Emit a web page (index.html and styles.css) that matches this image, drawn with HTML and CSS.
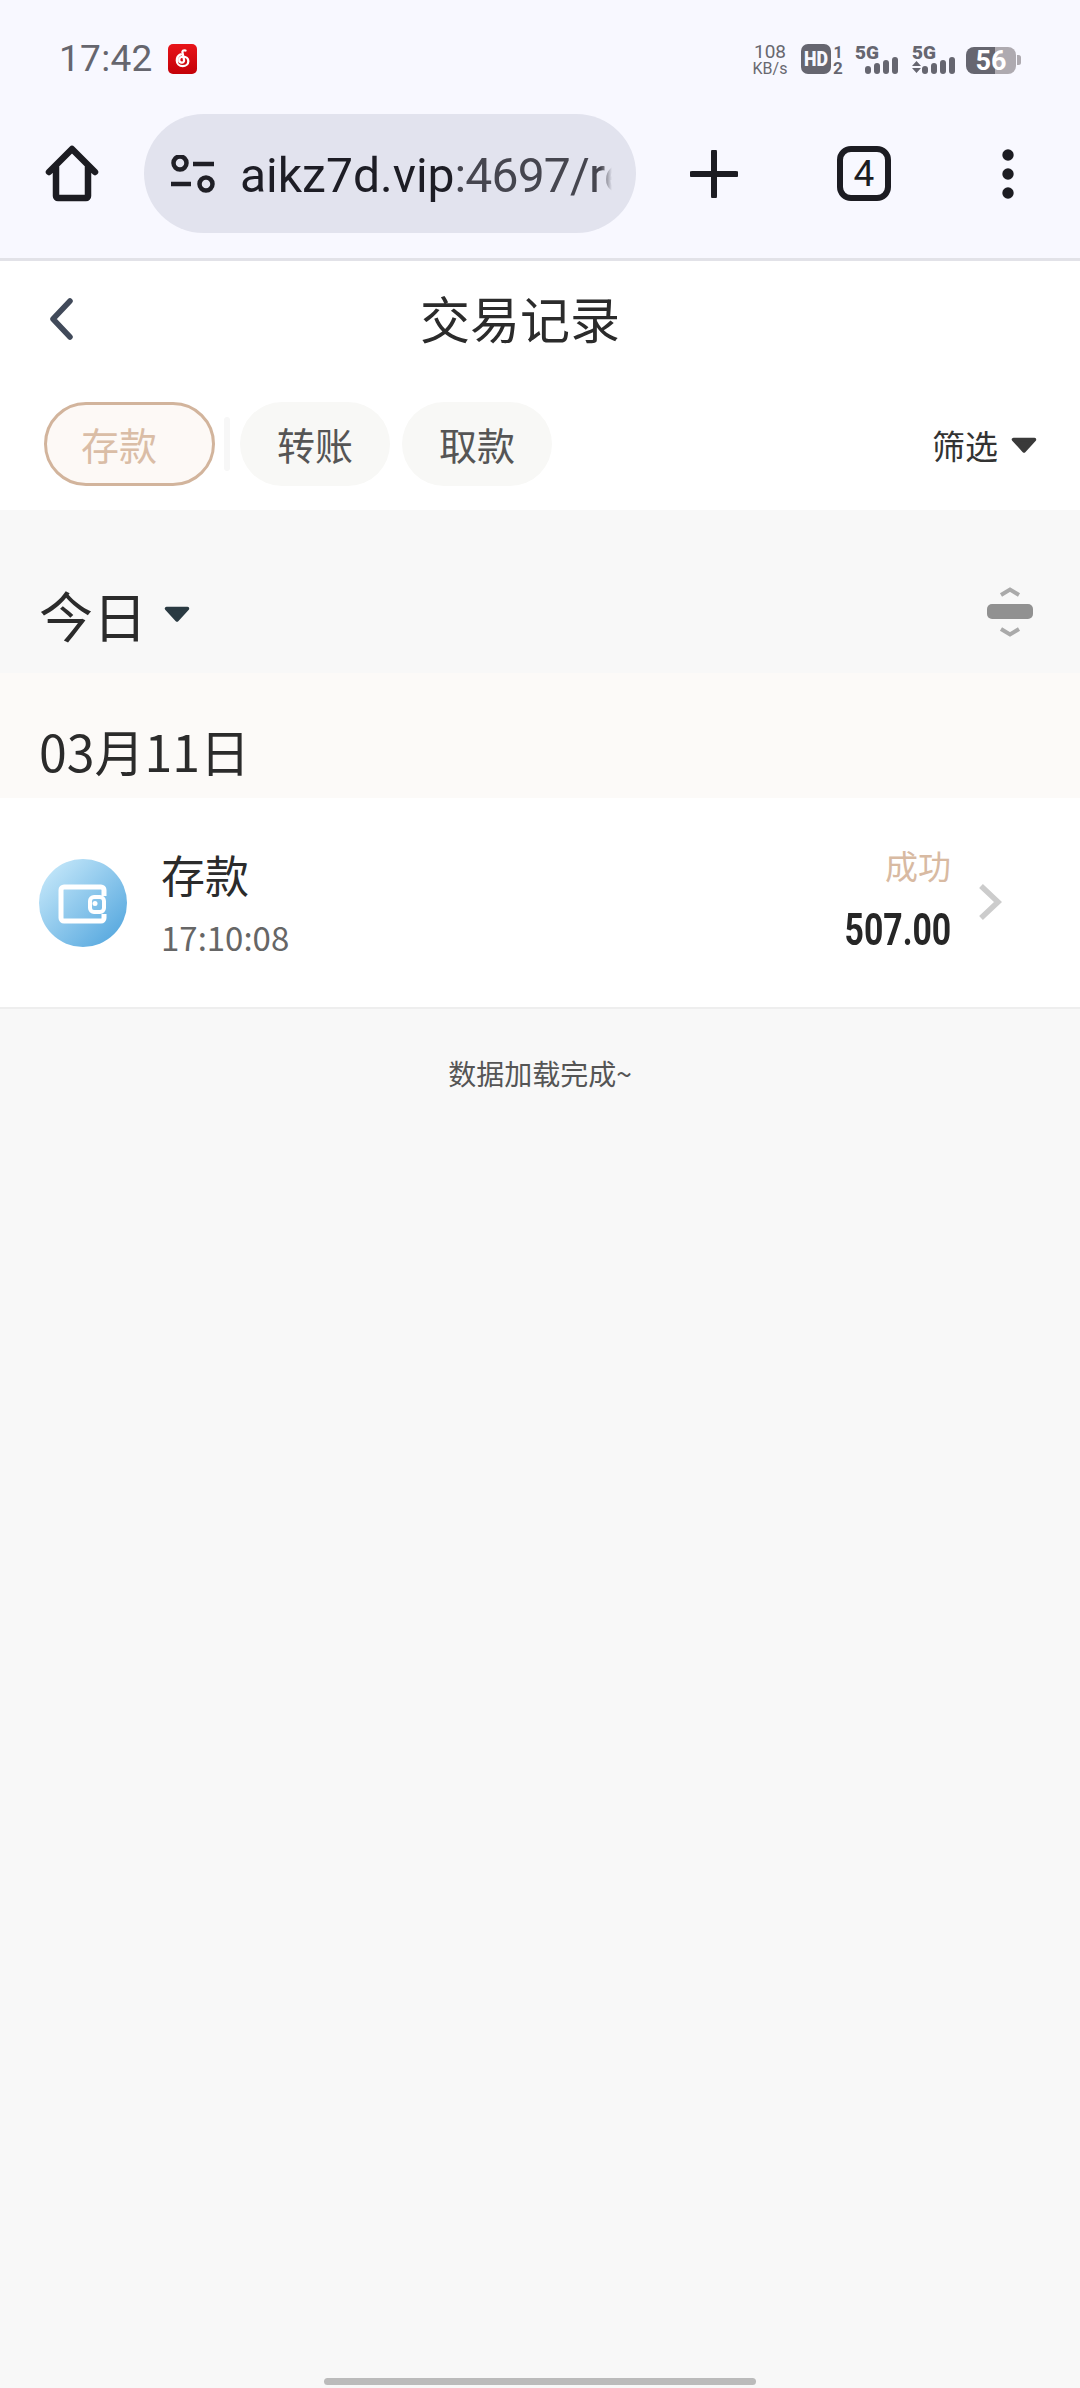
FILE: index.html
```html
<!DOCTYPE html>
<html lang="zh-CN">
<head>
<meta charset="utf-8">
<title>交易记录</title>
<link rel="stylesheet" href="styles.css">
</head>
<body>
<div class="chrome">
  <div class="statusbar">
    <div class="status-left">
      <span class="clock">17:42</span>
      <svg class="app-icon" width="29" height="30" viewBox="0 0 29 30">
        <defs><linearGradient id="red" x1="0" y1="0" x2="0" y2="1"><stop offset="0" stop-color="#e8141a"/><stop offset="1" stop-color="#c40008"/></linearGradient></defs>
        <rect width="29" height="30" rx="5" fill="url(#red)"/>
        <path d="M17.500 6.500c-2-.7-3.500.5-3 2.200l1.500 7c.4 1.800-.8 3-2.200 3-1.500 0-2.600-1.100-2.600-2.600 0-2 1.700-3.400 3.900-3.400 3 0 5.200 1.900 5.200 4.500 0 2.800-2.500 5-5.500 5-3.500 0-6-2.500-6-5.800 0-2.800 1.500-5 3.800-6" fill="none" stroke="#fff" stroke-width="2.300" stroke-linecap="round"/>
      </svg>
    </div>
    <svg class="status-icons" width="280" height="32" viewBox="0 0 280 32">
      <g fill="#666670" font-family="Roboto, sans-serif">
        <text x="25" y="15" text-anchor="middle" font-size="19" fill="#68686f">108</text>
        <text x="25" y="31" text-anchor="middle" font-size="16" fill="#68686f">KB/s</text>
        <rect x="56" y="1" width="30" height="30" rx="7"/>
        <text x="71" y="23" text-anchor="middle" font-size="20" font-weight="900" fill="#f8f8ff" textLength="24" lengthAdjust="spacingAndGlyphs">HD</text>
        <text x="93" y="15" text-anchor="middle" font-size="16" font-weight="700">1</text>
        <text x="93" y="31" text-anchor="middle" font-size="17" font-weight="700">2</text>
        <text x="110" y="16" font-size="19" font-weight="900" textLength="24">5G</text>
        <rect x="120" y="23" width="6" height="8" rx="3"/><rect x="129" y="20" width="6" height="11" rx="3"/><rect x="138" y="17" width="6" height="14" rx="3"/><rect x="147" y="14" width="6" height="17" rx="3"/>
        <text x="167" y="16" font-size="19" font-weight="900" textLength="24">5G</text>
        <path d="M167 23l4.500-5 4.500 5zM167 25h9l-4.500 5z"/>
        <rect x="177" y="23" width="6" height="8" rx="3"/><rect x="186" y="20" width="6" height="11" rx="3"/><rect x="195" y="17" width="6" height="14" rx="3"/><rect x="204" y="14" width="6" height="17" rx="3"/>
        <path d="M250 4h13a8 8 0 0 1 8 8v11a8 8 0 0 1-8 8h-13z" fill="#aeaab0"/>
        <path d="M272 12h1.500a2.500 2.500 0 0 1 2.500 2.500v5a2.500 2.500 0 0 1-2.500 2.500H272z" fill="#aeaab0"/>
        <path d="M229 4h21v27h-21a8 8 0 0 1-8-8V12a8 8 0 0 1 8-8z"/>
        <text x="246" y="27" text-anchor="middle" font-size="27" font-weight="700" fill="#fff">56</text>
      </g>
    </svg>
  </div>
  <div class="toolbar">
    <svg class="tool-icon home" width="56" height="58" viewBox="0 0 56 58">
      <path d="M5 27L28 4l23 23M12 22v29a2 2 0 0 0 2 2h28a2 2 0 0 0 2-2V22" fill="none" stroke="#1c1c22" stroke-width="6.500" stroke-linecap="round" stroke-linejoin="round"/>
    </svg>
    <div class="urlbar">
      <svg class="tune" width="46" height="38" viewBox="0 0 46 38">
        <g fill="none" stroke="#1f1f26" stroke-width="4.500">
          <circle cx="10" cy="8" r="6.500"/><circle cx="36" cy="29" r="6.500"/>
          <path d="M23 9h21M1 29h20"/>
        </g>
      </svg>
      <div class="url"><span class="host">aikz7d.vip</span><span class="path">:4697/re</span></div>
    </div>
    <svg class="tool-icon plus" width="48" height="48" viewBox="0 0 48 48">
      <path d="M24 2v44M2 24h44" stroke="#1c1c22" stroke-width="6" stroke-linecap="round"/>
    </svg>
    <div class="tabs-count">4</div>
    <svg class="tool-icon dots" width="12" height="50" viewBox="0 0 12 50">
      <circle cx="6" cy="6" r="5.700" fill="#1c1c22"/><circle cx="6" cy="25" r="5.700" fill="#1c1c22"/><circle cx="6" cy="44" r="5.700" fill="#1c1c22"/>
    </svg>
  </div>
</div>

<main class="page">
  <section class="top">
    <header class="title-row">
      <svg class="back" width="26" height="42" viewBox="0 0 26 42"><path d="M22 3L5 21l17 18" fill="none" stroke="#414a5a" stroke-width="5.500" stroke-linecap="round" stroke-linejoin="round"/></svg>
      <h1 class="title">交易记录</h1>
    </header>
    <div class="filter-row">
      <button class="tab tab-active">存款</button>
      <span class="tab-divider"></span>
      <button class="tab">转账</button>
      <button class="tab">取款</button>
      <div class="filter">
        <span>筛选</span>
        <svg width="26" height="17" viewBox="0 0 26 17"><path d="M2.500 2.500h21L13 14z" fill="#3a3a3a" stroke="#3a3a3a" stroke-width="3.500" stroke-linejoin="round"/></svg>
      </div>
    </div>
  </section>

  <section class="period">
    <div class="period-label">
      <span>今日</span>
      <svg width="26" height="17" viewBox="0 0 26 17"><path d="M2.500 2.500h21L13 14z" fill="#2a3a42" stroke="#2a3a42" stroke-width="3.500" stroke-linejoin="round"/></svg>
    </div>
    <svg class="sort" width="46" height="50" viewBox="0 0 46 50">
      <path d="M14 8l9-5.500L32 8M14 42l9 5.500 9-5.500" fill="none" stroke="#aaa" stroke-width="4"/>
      <rect y="17" width="46" height="15" rx="5" fill="#919191"/>
    </svg>
  </section>

  <div class="date-row">03月11日</div>

  <article class="record">
    <svg class="wallet" width="88" height="88" viewBox="0 0 88 88">
      <defs><linearGradient id="blue" x1="0.1" y1="0.1" x2="0.9" y2="0.9"><stop offset="0" stop-color="#c2e6f9"/><stop offset="1" stop-color="#58a9df"/></linearGradient></defs>
      <circle cx="44" cy="44" r="44" fill="url(#blue)"/>
      <path d="M65 37v-6a3 3 0 0 0-3-3H25a3 3 0 0 0-3 3v28a3 3 0 0 0 3 3h37a3 3 0 0 0 3-3v-4" fill="none" stroke="#fff" stroke-width="5"/>
      <rect x="51" y="38" width="14" height="15" rx="4" fill="none" stroke="#fff" stroke-width="4"/>
      <circle cx="56" cy="44.500" r="2.500" fill="#fff"/>
    </svg>
    <div class="record-main">
      <div class="record-name">存款</div>
      <div class="record-time">17:10:08</div>
    </div>
    <div class="record-side">
      <div class="record-status">成功</div>
      <div class="record-amount">507.00</div>
    </div>
    <svg class="chevron" width="24" height="38" viewBox="0 0 24 38"><path d="M3 3l17 16L3 35" fill="none" stroke="#ccc" stroke-width="5.500"/></svg>
  </article>

  <p class="done">数据加载完成~</p>
</main>
<div class="home-indicator"></div>
</body>
</html>
```

FILE: styles.css
```css
* { box-sizing: border-box; }
html, body { margin: 0; padding: 0; }
body {
  width: 1080px;
  height: 2388px;
  overflow: hidden;
  position: relative;
  background: #f8f8f8;
  font-family: "Noto Sans CJK SC", "Noto Sans", sans-serif;
  color: #2b2b2b;
}

/* browser chrome */
.chrome { background: #f8f8ff; border-bottom: 3px solid #e2e2e8; height: 261px; }
.statusbar { height: 114px; display: flex; align-items: flex-start; justify-content: space-between; padding: 43px 55px 0 59px; }
.status-left { display: flex; align-items: center; gap: 15px; }
.clock { font-family: Roboto, sans-serif; font-size: 37px; line-height: 32px; color: #66666e; letter-spacing: .3px; }
.status-icons { overflow: visible; }
.toolbar { height: 119px; display: flex; align-items: center; padding-left: 44px; }
.tool-icon { flex: none; display: block; }
.urlbar { width: 492px; height: 119px; margin-left: 44px; background: #e2e3ee; border-radius: 60px; display: flex; align-items: center; padding-left: 26px; flex: none; }
.tune { flex: none; margin-right: 24px; }
.url { width: 372px; margin-top: 4px; overflow: hidden; white-space: nowrap; font-family: Roboto, sans-serif; font-size: 48px; line-height: 60px; -webkit-mask-image: linear-gradient(90deg, #000 97%, transparent 100%); mask-image: linear-gradient(90deg, #000 97%, transparent 100%); }
.host { color: #1d1d25; }
.path { color: #46464f; letter-spacing: -.8px; }
.plus { margin-left: 54px; }
.tabs-count { flex: none; margin-left: 99px; width: 54px; height: 55px; border: 6px solid #1c1c22; border-radius: 14px; display: flex; align-items: center; justify-content: center; font-family: Roboto, sans-serif; font-size: 37px; color: #1c1c22; }
.dots { margin-left: 111px; }

/* white header */
.top { background: #fff; height: 249px; }
.title-row { height: 119px; display: flex; align-items: center; padding: 0 0 0 48px; }
.back { flex: none; margin-top: -3px; }
.title { margin: -8px 0 0 346px; font-size: 50px; font-weight: 400; line-height: 70px; color: #2b2b2b; }
.filter-row { height: 84px; margin-top: 22px; display: flex; align-items: center; padding-left: 44px; }
.tab { width: 150px; height: 84px; border: 0; border-radius: 42px; background: #f8f8f6; color: #555; font-family: inherit; font-size: 38px; line-height: 50px; padding: 0; margin-right: 12px; flex: none; }
.tab-active { width: 171px; background: #fdf9f6; border: 3px solid #d2b49c; color: #dabda6; text-align: left; padding-left: 34px; margin-right: 9px; }
.tab-divider { width: 6px; height: 54px; background: #f7f7f7; border-radius: 3px; margin-right: 10px; flex: none; }
.filter { margin-left: auto; margin-right: 43px; margin-top: 2px; display: flex; align-items: center; gap: 13px; font-size: 33px; color: #333; }

/* period */
.period { height: 163px; display: flex; align-items: center; justify-content: space-between; padding: 0 47px 0 39px; background: #f8f8f8; }
.period-label { display: flex; align-items: center; gap: 17px; font-size: 54px; line-height: 70px; color: #2b2b2b; margin-top: 46px; }
.sort { margin-top: 40px; }
.date-row { height: 125px; background: #fcfaf8; padding: 42px 0 0 39px; font-size: 50px; line-height: 70px; color: #2b2b2b; }

/* record */
.record { height: 211px; background: #fff; border-bottom: 2px solid #eeeeee; display: flex; align-items: center; padding: 0 0 0 39px; }
.wallet { flex: none; }
.record-main { margin-left: 34px; flex: 1; }
.record-name { font-size: 44px; line-height: 60px; color: #2b2b2b; margin-top: -2px; }
.record-time { font-size: 33px; line-height: 44px; color: #666; margin-top: 11px; }
.record-side { text-align: right; margin-top: -1px; }
.record-status { font-size: 33px; line-height: 44px; color: #d8baa2; margin-top: -6px; }
.record-amount { font-family: Roboto, sans-serif; font-size: 45px; line-height: 50px; font-weight: 700; color: #262626; margin-top: 18px; transform: scaleX(.75); transform-origin: right center; }
.chevron { flex: none; margin: -2px 78px 0 27px; }

.done { margin: 44px 0 0; text-align: center; font-size: 28px; line-height: 40px; color: #555; }

.home-indicator { position: absolute; left: 324px; top: 2378px; width: 432px; height: 7px; border-radius: 4px; background: #bbb; }
```
